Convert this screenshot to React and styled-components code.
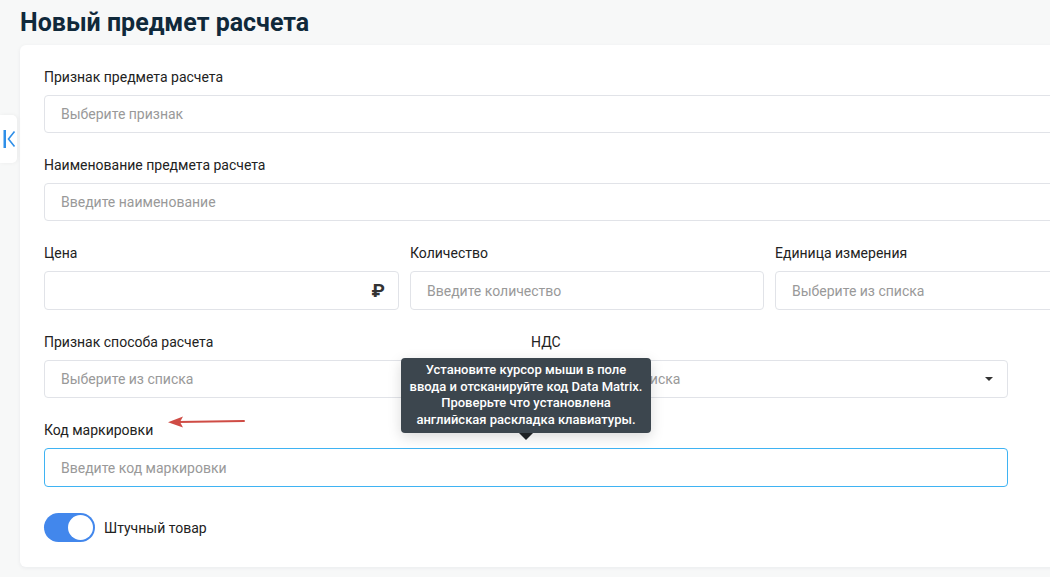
import React from "react";
import styled, { createGlobalStyle } from "styled-components";

const Global = createGlobalStyle`
  html, body { margin: 0; padding: 0; }
  body {
    background: #f7f8f8;
    font-family: Roboto, "Noto Sans", "Liberation Sans", sans-serif;
    width: 1050px;
    height: 577px;
    overflow: hidden;
  }
  * { box-sizing: border-box; }
`;

const Page = styled.div`
  position: relative;
  width: 1050px;
  height: 577px;
  overflow: hidden;
  padding: 7px 0 0 20px;
`;

const Title = styled.h1`
  margin: 0 0 7px 0;
  font-size: 25px;
  line-height: 31px;
  font-weight: 700;
  color: #10293b;
`;

const Card = styled.div`
  width: 1120px;
  height: 522px;
  background: #fff;
  border-radius: 6px 0 0 6px;
  box-shadow: 0 1px 4px rgba(20, 40, 60, 0.06);
  padding: 22px 0 0 24px;
  display: flex;
  flex-direction: column;
`;

const Field = styled.div`
  display: flex;
  flex-direction: column;
  margin-bottom: 22px;
  width: ${(p) => p.$width || "100%"};
`;

const Label = styled.label`
  font-size: 14px;
  line-height: 20px;
  color: #222;
  margin-bottom: 8px;
  position: relative;
`;

const InputBox = styled.div`
  position: relative;
  height: ${(p) => (p.$tall ? "39px" : "38px")};
  border: 1px solid ${(p) => (p.$focus ? "#3fb3f3" : "#e1e3e8")};
  border-radius: 4px;
  background: #fff;
  display: flex;
  align-items: center;
  padding: 0 16px;
  font-size: 14px;
  color: #999;
`;

const Row = styled.div`
  display: grid;
  grid-template-columns: ${(p) => p.$cols};
  column-gap: 11px;
  width: ${(p) => p.$width};
`;

const Ruble = styled.span`
  margin-left: auto;
  margin-right: -3px;
  font-size: 19px;
  font-weight: 700;
  color: #333;
`;

const Caret = styled.span`
  margin-left: auto;
  margin-right: -2px;
  width: 0;
  height: 0;
  border-left: 4px solid transparent;
  border-right: 4px solid transparent;
  border-top: 4px solid #333;
`;

const ToggleRow = styled.div`
  display: flex;
  align-items: center;
  gap: 9px;
  margin-top: 4px;
  font-size: 14px;
  color: #222;
`;

const Switch = styled.div`
  width: 51px;
  height: 29px;
  border-radius: 15px;
  background: #4287ec;
  position: relative;
  &::after {
    content: "";
    position: absolute;
    right: 2px;
    top: 2px;
    width: 25px;
    height: 25px;
    border-radius: 50%;
    background: #fff;
  }
`;

const Tooltip = styled.div`
  position: absolute;
  left: 401px;
  top: 358px;
  width: 250px;
  height: 75px;
  background: #3c464e;
  border-radius: 4px;
  color: #fff;
  font-size: 13px;
  font-weight: 500;
  line-height: 16.5px;
  text-align: center;
  padding: 4px 6px;
  box-shadow: 0 4px 14px rgba(0, 0, 0, 0.15);
  &::after {
    content: "";
    position: absolute;
    left: 118px;
    bottom: -7px;
    border-left: 7px solid transparent;
    border-right: 7px solid transparent;
    border-top: 7px solid #1f2326;
  }
`;

const SideTab = styled.div`
  position: absolute;
  left: 0;
  top: 115px;
  width: 17px;
  height: 48px;
  background: #fff;
  border-radius: 0 5px 5px 0;
  box-shadow: 1px 0 4px rgba(0, 0, 0, 0.05);
  display: flex;
  align-items: center;
  justify-content: center;
`;

const ArrowMark = styled.svg`
  position: absolute;
  left: 124px;
  top: -5px;
`;

export default function App() {
  return (
    <>
      <Global />
      <Page>
        <Title>Новый предмет расчета</Title>
        <Card>
          <Field>
            <Label>Признак предмета расчета</Label>
            <InputBox>Выберите признак</InputBox>
          </Field>
          <Field>
            <Label>Наименование предмета расчета</Label>
            <InputBox>Введите наименование</InputBox>
          </Field>
          <Row $cols="355px 354px 355px" $width="1086px">
            <Field>
              <Label>Цена</Label>
              <InputBox $tall>
                <Ruble>₽</Ruble>
              </InputBox>
            </Field>
            <Field>
              <Label>Количество</Label>
              <InputBox $tall>Введите количество</InputBox>
            </Field>
            <Field>
              <Label>Единица измерения</Label>
              <InputBox $tall>Выберите из списка</InputBox>
            </Field>
          </Row>
          <Row $cols="476px 477px" $width="964px">
            <Field>
              <Label>Признак способа расчета</Label>
              <InputBox>Выберите из списка</InputBox>
            </Field>
            <Field>
              <Label>НДС</Label>
              <InputBox>
                Выберите из списка
                <Caret />
              </InputBox>
            </Field>
          </Row>
          <Field $width="964px">
            <Label>
              Код маркировки
              <ArrowMark width="80" height="14" viewBox="0 0 80 14">
                <line x1="10" y1="7" x2="76" y2="6" stroke="#cf4c45" strokeWidth="2" strokeLinecap="round" />
                <path d="M0 7.3 L15 1.5 L12 7 L15 12.5 Z" fill="#cf4c45" />
              </ArrowMark>
            </Label>
            <InputBox $focus $tall>Введите код маркировки</InputBox>
          </Field>
          <ToggleRow>
            <Switch />
            Штучный товар
          </ToggleRow>
        </Card>
        <Tooltip>
          Установите курсор мыши в поле ввода и отсканируйте код Data Matrix. Проверьте что установлена английская раскладка клавиатуры.
        </Tooltip>
        <SideTab>
          <svg width="14" height="22" viewBox="0 0 14 22">
            <rect x="1.5" y="2" width="2.5" height="18" fill="#2f8fe8" />
            <path d="M12.5 3.5 L6.5 11 L12.5 18.5" stroke="#2f8fe8" strokeWidth="1.6" fill="none" />
          </svg>
        </SideTab>
      </Page>
    </>
  );
}
